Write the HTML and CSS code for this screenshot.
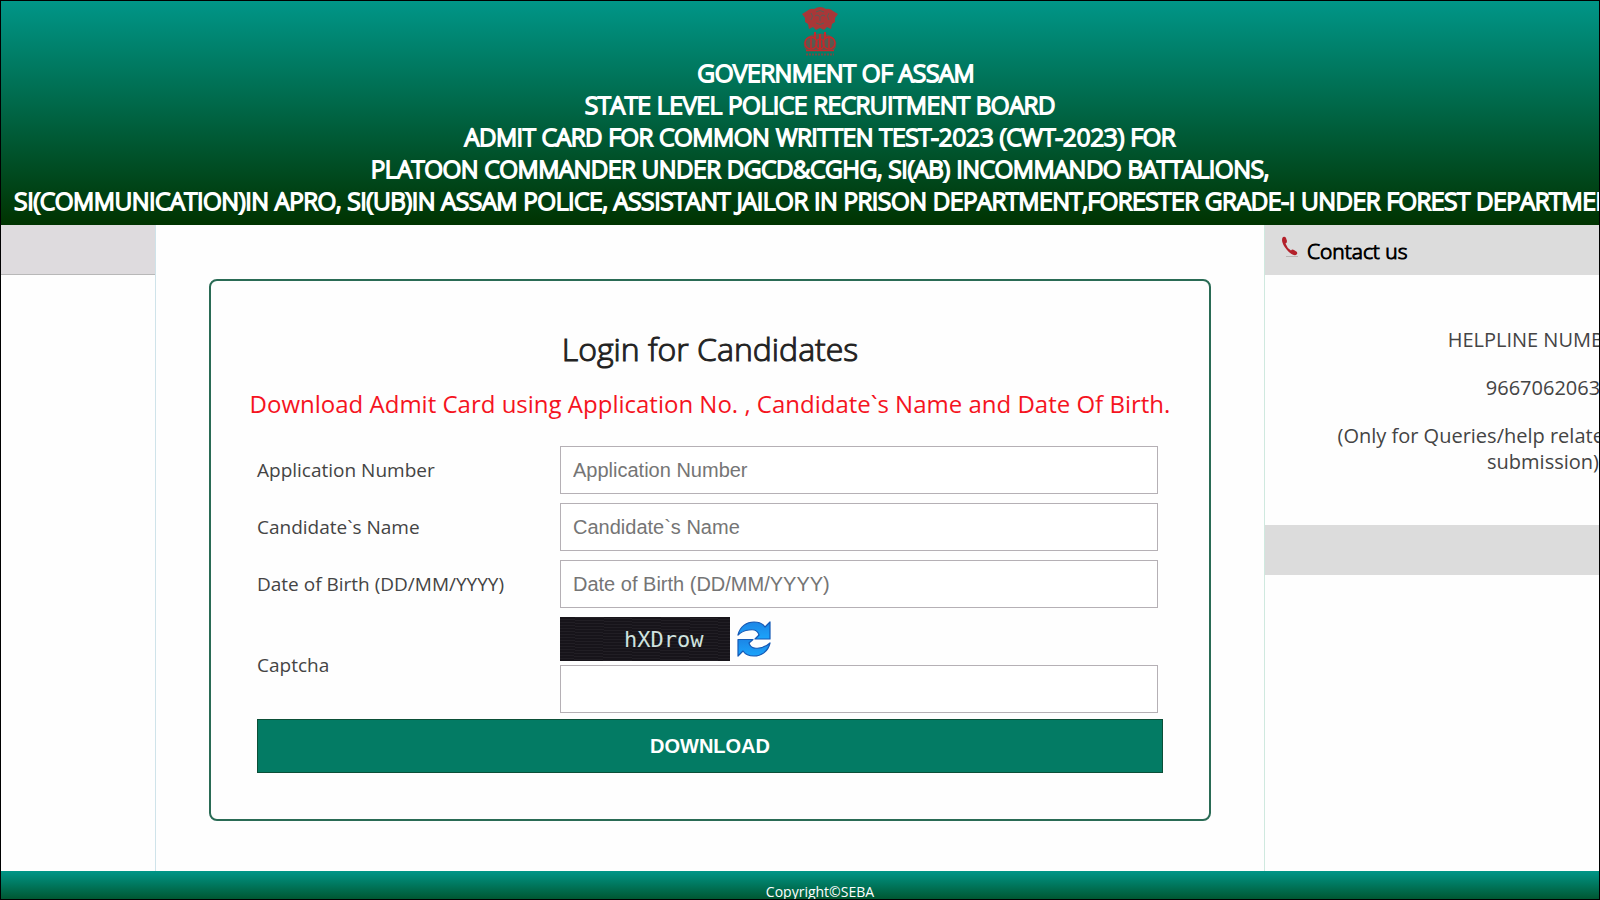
FILE: index.html
```html
<!DOCTYPE html>
<html lang="en">
<head>
    <meta charset="UTF-8">
    <meta name="viewport" content="width=device-width, initial-scale=1.0">
    <title>Admit Card - State Level Police Recruitment Board</title>
    <link rel="stylesheet" href="styles.css">
</head>
<body>

<div class="page">
    <header class="header">
        <svg class="emblem" viewBox="0 0 36 51" aria-hidden="true">
            <!-- lions -->
            <path d="M5 5 Q8 2 12 3 Q18 -1 24 3 Q28 2 31 5 L36 8 L33 12 L33 16 L30 18 L29 23 L25 21 L22 24 L18 22 L14 24 L11 21 L7 23 L6 18 L3 16 L3 12 L0 8 Z" fill="#c5282b" fill-opacity="0.85"/>
            <path d="M9 7 Q12 10 9 14 M27 7 Q24 10 27 14 M14 6 Q18 3 22 6 M13 10 Q15 8 17 10 M19 10 Q21 8 23 10 M18 10 V15 M14 17 Q18 20 22 17" fill="none" stroke="#3d6a60" stroke-width="0.8"/>
            <!-- base -->
            <path d="M13 26 V33 M18 28 V44 M23 26 V33" fill="none" stroke="#c5282b" stroke-width="2"/>
            <path d="M9 29 Q18 26 27 29 Q36 33 34 41 Q33 44 30 45 H6 Q3 44 2 41 Q0 33 9 29 Z" fill="#c5282b" fill-opacity="0.45"/>
            <g fill="none" stroke="#c5282b" stroke-width="1.5">
                <ellipse cx="9" cy="37" rx="6" ry="6"/>
                <ellipse cx="27" cy="37" rx="6" ry="6"/>
                <ellipse cx="18" cy="38" rx="4" ry="5"/>
                <path d="M9 32 V42 M27 32 V42 M4 44.500 H32"/>
            </g>
            <path d="M4 48.500 H32" stroke="#a03a36" stroke-width="2" stroke-dasharray="2 1" stroke-opacity="0.7"/>
        </svg>
        <h1 class="header-title">
            <span class="header-govt">GOVERNMENT OF ASSAM</span><br>
            STATE LEVEL POLICE RECRUITMENT BOARD<br>
            ADMIT CARD FOR COMMON WRITTEN TEST-2023 (CWT-2023) FOR<br>
            PLATOON COMMANDER UNDER DGCD&amp;CGHG, SI(AB) INCOMMANDO BATTALIONS,<br>
            SI(COMMUNICATION)IN APRO, SI(UB)IN ASSAM POLICE, ASSISTANT JAILOR IN PRISON DEPARTMENT,FORESTER GRADE-I UNDER FOREST DEPARTMENT
        </h1>
    </header>

    <div class="content">
        <aside class="sidebar">
            <div class="bar bar-left"></div>
        </aside>

        <main class="main">
            <form class="login">
                <h2 class="login-title">Login for Candidates</h2>
                <p class="login-note">Download Admit Card using Application No. , Candidate`s Name and Date Of Birth.</p>

                <div class="row">
                    <label for="appNumber">Application Number</label>
                    <input type="text" id="appNumber" placeholder="Application Number">
                </div>
                <div class="row">
                    <label for="candidateName">Candidate`s Name</label>
                    <input type="text" id="candidateName" placeholder="Candidate`s Name">
                </div>
                <div class="row">
                    <label for="dob">Date of Birth (DD/MM/YYYY)</label>
                    <input type="text" id="dob" placeholder="Date of Birth (DD/MM/YYYY)">
                </div>
                <div class="row">
                    <label for="captcha">Captcha</label>
                    <div class="captcha">
                        <div class="captcha-top">
                            <span class="captcha-code">hXDrow</span>
                            <button type="button" class="refresh" aria-label="Refresh captcha">
                                <svg viewBox="0 0 34 36">
                                    <defs>
                                        <linearGradient id="blue" x1="0" y1="0" x2="0" y2="1">
                                            <stop offset="0" stop-color="#1c86e6"/>
                                            <stop offset="1" stop-color="#1ba4fb"/>
                                        </linearGradient>
                                    </defs>
                                    <g fill="url(#blue)" stroke="#1559b5" stroke-width="1.2" stroke-linejoin="round">
                                        <path d="M1 14 C3 5 10 1 17 1 C22 1 26 3 28 6 L33 1 V18 H18 L22 14 C21 10 17 8 12 9 C7 9.500 4 11 1 14 Z"/>
                                        <path d="M33 22 C31 31 24 35 17 35 C12 35 8 33 6 30 L1 35 V18.500 H16 L12 22 C13 26 17 28 22 27 C27 26.500 30 25 33 22 Z"/>
                                    </g>
                                </svg>
                            </button>
                        </div>
                        <input type="text" id="captcha">
                    </div>
                </div>

                <button type="submit" class="download">DOWNLOAD</button>
            </form>
        </main>

        <aside class="contact">
            <div class="bar">
                <svg class="phone" viewBox="0 0 18 22" aria-hidden="true">
                    <path d="M5 20.500 H17" stroke="#b9b4b4" stroke-width="1"/>
                    <path d="M2 1 Q4 0 5 2 L6 5 Q6 7 4.500 7.500 Q6 12 10 14.500 Q11 13 13 14 L16 16 Q17 18 15 19 Q11 20 6 14 Q1 8 1 4 Q1 2 2 1 Z" fill="#b3202a"/>
                </svg>
                <h3 class="contact-title">Contact us</h3>
            </div>
            <div class="contact-text">
                <p>HELPLINE NUMBERS</p>
                <p>9667062063</p>
                <p>(Only for Queries/help related to application<br>submission)</p>
            </div>
            <div class="bar"></div>
        </aside>
    </div>

    <footer class="footer">Copyright©SEBA</footer>
</div>

</body>
</html>
```
FILE: styles.css
```css
/* General Styles */
* {
    box-sizing: border-box;
}

body {
    margin: 0;
    font-family: "Open Sans", sans-serif;
    font-size: 19px;
    color: #444;
    background-color: #fefefe;
}

.page {
    display: flex;
    flex-direction: column;
    height: 100vh;
    border: 1px solid #000;
    overflow: hidden;
}

/* Header, a little wider than the window */
.header {
    flex: none;
    width: calc(100% + 40px);
    padding: 5px 0 8px;
    text-align: center;
    background: linear-gradient(#009688, #003300);
}

.emblem {
    display: block;
    width: 36px;
    height: 51px;
    margin: 0 auto;
}

.header-title {
    margin: 0;
    font-size: 24px;
    font-weight: 300;
    line-height: 32px;
    color: #fff;
    white-space: nowrap;
    -webkit-text-stroke: 2px #fff;
}

.header-govt {
    padding-left: 32px;
}

/* Columns */
.content {
    flex: none;
    display: grid;
    grid-template-columns: 155px minmax(0, 1fr) 335px;
}

.sidebar {
    border-right: 1px solid #cfe3ea;
}

.bar {
    display: flex;
    gap: 8px;
    height: 50px;
    padding: 11px 16px;
    background-color: #dcdcdc;
}

.bar-left {
    background-color: #dedbde;
    border-bottom: 1px solid #b8b8b8;
}

.main {
    padding: 54px 53px 50px;
}

/* Login form */
.login {
    padding: 46px;
    border: 2px solid #2a6b55;
    border-radius: 8px;
}

.login-title {
    margin: 0 0 15px;
    font-size: 32px;
    font-weight: 300;
    line-height: 44px;
    text-align: center;
    color: #222;
    -webkit-text-stroke: 1px #222;
}

.login-note {
    margin: 0 -8px 24px;
    font-size: 24px;
    line-height: 36px;
    text-align: center;
    white-space: nowrap;
    color: #f5141e;
}

.row {
    display: grid;
    grid-template-columns: 303px 1fr;
    align-items: center;
    margin-bottom: 9px;
    padding-right: 5px;
}

.row input {
    width: 100%;
    height: 48px;
    padding: 0 12px;
    border: 1px solid #b5b0b5;
    font-family: Arial, "Liberation Sans", sans-serif;
    font-size: 20px;
    background-color: #fff;
}

.row input::placeholder {
    color: #757575;
}

.captcha-top {
    display: flex;
    align-items: center;
    gap: 7px;
    margin-bottom: 4px;
}

.captcha-code {
    width: 170px;
    height: 44px;
    padding-left: 64px;
    font-family: "DejaVu Sans Mono", monospace;
    font-size: 22px;
    line-height: 46px;
    color: #cfe2df;
    background: repeating-linear-gradient(2deg, #17141a 0 2px, #211e24 2px 3px);
}

.refresh {
    width: 34px;
    height: 36px;
    padding: 0;
    border: none;
    background: none;
    cursor: pointer;
}

.refresh svg {
    display: block;
}

.download {
    display: block;
    width: 100%;
    height: 54px;
    margin-top: -3px;
    border: 1px solid #0b4f37;
    font-family: Arial, "Liberation Sans", sans-serif;
    font-size: 20px;
    font-weight: bold;
    color: #fff;
    background-color: #037b64;
    cursor: pointer;
}

/* Contact column, its text runs past the window edge */
.contact {
    border-left: 1px solid #cfe9df;
}

.phone {
    width: 18px;
    height: 22px;
}

.contact-title {
    margin: 0;
    font-size: 21px;
    font-weight: 300;
    line-height: 30px;
    color: #000;
    -webkit-text-stroke: 1px #000;
}

.contact-text {
    width: 556px;
    padding: 52px 0 28px;
    font-size: 20px;
    line-height: 26px;
    text-align: center;
    white-space: nowrap;
}

.contact-text p {
    margin: 0 0 22px;
}

/* Footer */
.footer {
    flex: none;
    width: calc(100% + 40px);
    padding: 9px 0 11px;
    font-size: 14px;
    line-height: 24px;
    text-align: center;
    color: #fff;
    background: linear-gradient(#009688, #003300);
}
```
